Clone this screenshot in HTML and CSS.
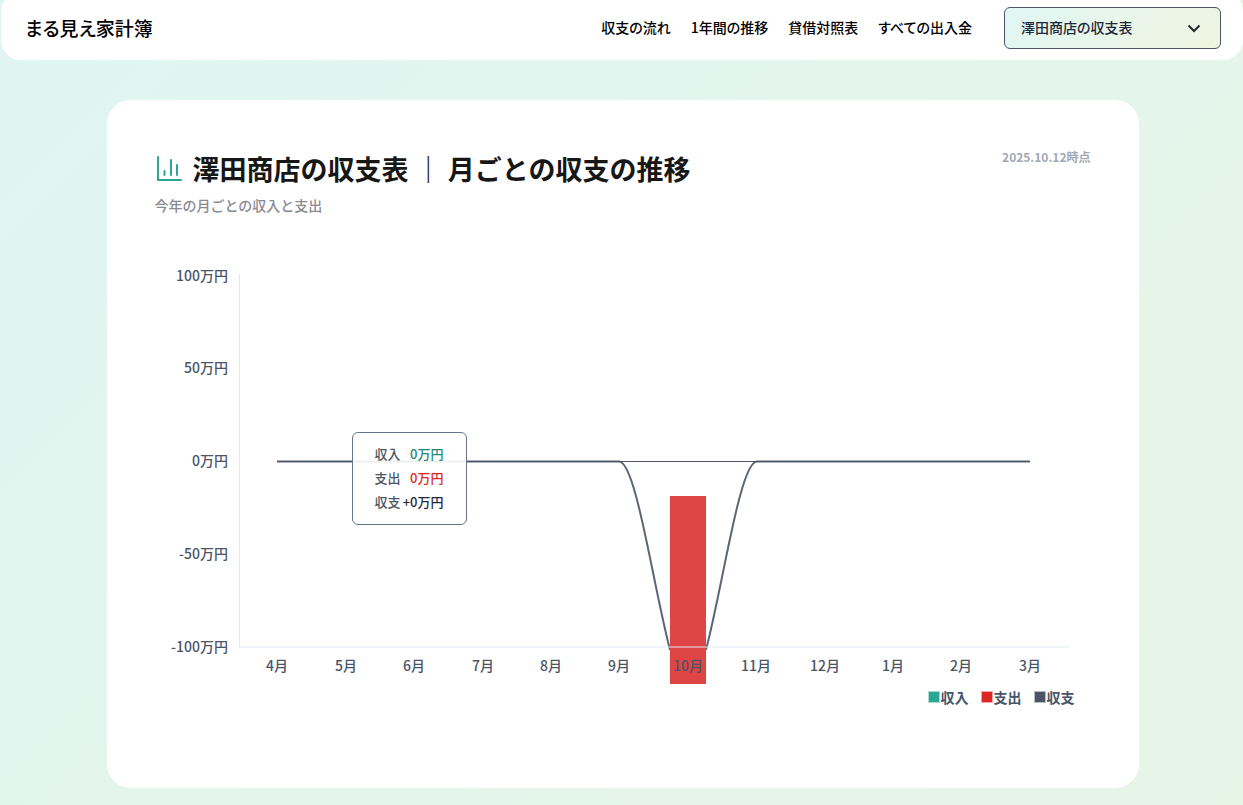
FILE: index.html
```html
<!DOCTYPE html>
<html lang="ja">
<head>
    <meta charset="UTF-8">
    <meta name="viewport" content="width=device-width, initial-scale=1.0">
    <title>まる見え家計簿</title>
    <link rel="stylesheet" href="styles.css">
</head>
<body>

<header class="header">
    <a href="#" class="logo">まる見え家計簿</a>
    <nav class="nav">
        <a href="#flow">収支の流れ</a>
        <a href="#monthly">1年間の推移</a>
        <a href="#balance">貸借対照表</a>
        <a href="#transactions">すべての出入金</a>
    </nav>
    <div class="select-box">
        <select class="org-select" aria-label="収支表の選択">
            <option>澤田商店の収支表</option>
        </select>
        <svg class="chevron" viewBox="0 0 16 16" aria-hidden="true">
            <path d="M2.500 5.500l5.500 5.500 5.500-5.500"/>
        </svg>
    </div>
</header>

<main class="card" id="monthly">
    <div class="card-header">
        <div>
            <div class="title-row">
                <svg class="title-icon" viewBox="0 0 28 28" aria-hidden="true">
                    <path d="M3 2v23h23M9.500 20v-4M16 20V5M22 20V10"/>
                </svg>
                <h1>澤田商店の収支表 ｜ 月ごとの収支の推移</h1>
            </div>
            <p class="subtitle">今年の月ごとの収入と支出</p>
        </div>
        <p class="date">2025.10.12時点</p>
    </div>

    <div class="chart">
        <svg class="chart-svg" viewBox="0 0 936 408" role="img">
            <defs>
                <clipPath id="plot"><rect x="84" y="0" width="831" height="390"/></clipPath>
            </defs>

            <!-- 収支ライン -->
            <path class="net-line" clip-path="url(#plot)" d="M122 201.500H464C487 201.500 510 428 533 428S579 201.500 602 201.500H875"/>
            <path class="zero-line" d="M122 201.500H875"/>

            <!-- 支出バー -->
            <rect class="bar-expense" x="515" y="236" width="36" height="188"/>

            <path class="axis" d="M84.500 14V387H914"/>

            <g class="label-y">
                <text x="73" y="21">100万円</text>
                <text x="73" y="113">50万円</text>
                <text x="73" y="206">0万円</text>
                <text x="73" y="299">-50万円</text>
                <text x="73" y="392">-100万円</text>
            </g>
            <g class="label-x">
                <text x="122" y="411">4月</text>
                <text x="191" y="411">5月</text>
                <text x="259" y="411">6月</text>
                <text x="328" y="411">7月</text>
                <text x="396" y="411">8月</text>
                <text x="464" y="411">9月</text>
                <text x="533" y="411">10月</text>
                <text x="601" y="411">11月</text>
                <text x="670" y="411">12月</text>
                <text x="738" y="411">1月</text>
                <text x="806" y="411">2月</text>
                <text x="875" y="411">3月</text>
            </g>
        </svg>

        <dl class="tooltip">
            <dt>収入</dt><dd class="income">0万円</dd>
            <dt>支出</dt><dd class="expense">0万円</dd>
            <dt>収支</dt><dd class="net">+0万円</dd>
        </dl>
    </div>

    <ul class="legend">
        <li class="legend-income">収入</li>
        <li class="legend-expense">支出</li>
        <li class="legend-net">収支</li>
    </ul>
</main>

</body>
</html>
```
FILE: styles.css
```css
*, *::before {
    box-sizing: border-box;
}
body {
    margin: 0;
    padding-left: 2px;
    min-height: 100vh;
    font-family: "Noto Sans CJK JP", sans-serif;
    background: linear-gradient(135deg, #e0f5f2, #e7f5e7);
    color: #171717;
}
h1, p, ul, dl, dd {
    margin: 0;
    padding: 0;
}
.header {
    display: flex;
    align-items: center;
    margin: -8px 0 40px -1px;
    padding: 15px 22px 11px 24px;
    background-color: #fff;
    border-radius: 20px;
    font-feature-settings: "palt";
    font-weight: 500;
}
.logo {
    margin-right: auto;
    color: #000;
    font-size: 19px;
    line-height: 28px;
    text-decoration: none;
}
.nav {
    display: flex;
    gap: 20px;
    margin-right: 32px;
    padding-bottom: 2px;
}
.nav a {
    color: #000;
    font-size: 14px;
    line-height: 20px;
    text-decoration: none;
}
.select-box {
    position: relative;
    width: 217px;
}
.org-select {
    appearance: none;
    display: block;
    width: 100%;
    height: 42px;
    padding: 0 40px 2px 16px;
    border: 1px solid #4a5568;
    border-radius: 6px;
    background: linear-gradient(135deg, #e0f7f4, #f0f4e0);
    color: #1e293b;
    font-family: inherit;
    font-size: 14px;
    font-weight: 500;
    font-feature-settings: "palt";
}
.chevron {
    position: absolute;
    top: 13px;
    right: 19px;
    width: 16px;
    height: 16px;
    fill: none;
    stroke: #1f2937;
    stroke-width: 2;
    pointer-events: none;
}
.card {
    max-width: 1032px;
    min-height: 688px;
    margin: 0 auto;
    padding: 48px;
    background-color: #fff;
    border-radius: 24px;
}
.card-header {
    display: flex;
    justify-content: space-between;
    align-items: flex-start;
    margin-bottom: 45px;
}
.title-row {
    display: flex;
    align-items: center;
    gap: 10px;
}
.title-icon {
    width: 28px;
    height: 28px;
    fill: none;
    stroke: #2aa693;
    stroke-width: 2;
    stroke-linecap: round;
    stroke-linejoin: round;
}
h1 {
    font-size: 27px;
    font-weight: 700;
    line-height: 42px;
}
.subtitle {
    margin-top: 5px;
    color: #8a8a93;
    font-size: 14px;
    font-weight: 500;
    line-height: 20px;
}
.date {
    color: #a1a8b3;
    font-size: 12px;
    font-weight: 700;
    line-height: 18px;
}
.chart {
    position: relative;
}
.chart-svg {
    display: block;
    width: 100%;
    height: auto;
    overflow: visible;
    fill: #4a5568;
    font-size: 14px;
    font-weight: 500;
}
.label-y {
    text-anchor: end;
}
.label-x {
    text-anchor: middle;
}
.axis {
    fill: none;
    stroke: #e2e8f0;
}
.net-line {
    fill: none;
    stroke: #4a5568;
    stroke-width: 2;
    opacity: 0.9;
}
.zero-line {
    fill: none;
    stroke: #4a5568;
}
.bar-expense {
    fill: #e04545;
}
.tooltip {
    position: absolute;
    top: 172px;
    left: 197px;
    display: grid;
    grid-template-columns: auto auto;
    justify-content: space-between;
    width: 115px;
    padding: 9px 22px 10px;
    border: 1px solid #64748b;
    border-radius: 6px;
    background-color: rgba(255, 255, 255, 0.9);
    color: #4b5563;
    font-size: 13px;
    font-weight: 500;
    line-height: 24px;
}
.tooltip dd {
    text-align: right;
}
.income {
    color: #238771;
}
.expense {
    color: #dc2626;
}
.net {
    color: #1e293b;
}
.legend {
    display: flex;
    justify-content: flex-end;
    gap: 12px;
    margin-top: 19px;
    padding-right: 16px;
    list-style: none;
    color: #4a5568;
    font-size: 14px;
    font-weight: 700;
    line-height: 20px;
}
.legend li {
    display: flex;
    align-items: center;
    gap: 1px;
}
.legend li::before {
    content: "";
    width: 12px;
    height: 12px;
    border: 1px solid rgba(255, 255, 255, 0.6);
}
.legend-income::before {
    background-color: #2aa693;
}
.legend-expense::before {
    background-color: #dc2626;
}
.legend-net::before {
    background-color: #4a5568;
}
```
